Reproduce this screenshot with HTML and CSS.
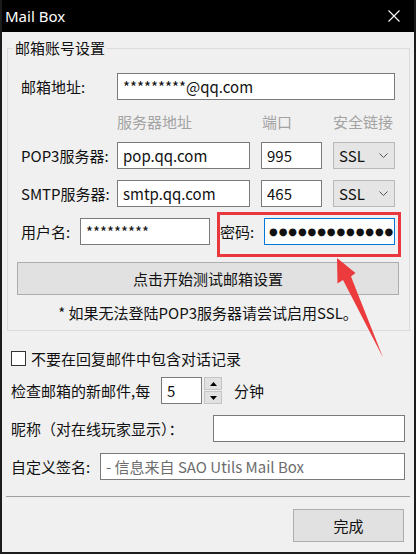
FILE: index.html
```html
<!doctype html>
<html lang="zh-CN">
<head>
  <meta charset="UTF-8" />
  <title>Mail Box</title>
  <link rel="stylesheet" href="styles.css">
</head>
<body>

<section class="window">
  <div class="titlebar">
    <span class="title">Mail Box</span>
    <svg class="close" width="12" height="12" viewBox="0 0 12 12">
      <path d="M0.5,0.5 L11.5,11.5 M11.5,0.5 L0.5,11.5" stroke="#fff" stroke-width="1.1" fill="none" />
    </svg>
  </div>

  <div class="main">
    <fieldset class="group">
      <legend>邮箱账号设置</legend>

      <div class="row">
        <label class="lbl lbl-mail">邮箱地址:</label>
        <input class="field grow" type="text" value="*********@qq.com" />
      </div>

      <div class="heads">
        <span class="h-host">服务器地址</span>
        <span class="h-port">端口</span>
        <span class="h-ssl">安全链接</span>
      </div>

      <div class="row srv">
        <label class="lbl lbl-srv">POP3服务器:</label>
        <input class="field host" type="text" value="pop.qq.com" />
        <input class="field port" type="text" value="995" />
        <div class="select"><span>SSL</span>
          <svg width="9" height="6" viewBox="0 0 9 6"><path d="M0.5,0.5 L4.5,4.5 L8.5,0.5" stroke="#555" fill="none" /></svg>
        </div>
      </div>

      <div class="row srv">
        <label class="lbl lbl-srv">SMTP服务器:</label>
        <input class="field host" type="text" value="smtp.qq.com" />
        <input class="field port" type="text" value="465" />
        <div class="select"><span>SSL</span>
          <svg width="9" height="6" viewBox="0 0 9 6"><path d="M0.5,0.5 L4.5,4.5 L8.5,0.5" stroke="#555" fill="none" /></svg>
        </div>
      </div>

      <div class="row srv">
        <label class="lbl lbl-user">用户名:</label>
        <input class="field user" type="text" value="*********" />
        <label class="lbl lbl-pass">密码:</label>
        <input class="field pass" type="text" value="●●●●●●●●●●●●●●●●" />
      </div>

      <button class="btn btn-test" type="button">点击开始测试邮箱设置</button>
      <p class="note">* 如果无法登陆POP3服务器请尝试启用SSL。</p>
    </fieldset>

    <div class="opts">
      <label class="check"><span class="box"></span>不要在回复邮件中包含对话记录</label>

      <div class="row interval">
        <span class="lbl lbl-every">检查邮箱的新邮件,每</span>
        <input class="field num" type="text" value="5" />
        <div class="spin">
          <span class="spin-btn"><svg width="7" height="4" viewBox="0 0 7 4"><path d="M0,4 L3.5,0 L7,4 z" fill="#000" /></svg></span>
          <span class="spin-btn"><svg width="7" height="4" viewBox="0 0 7 4"><path d="M0,0 L3.5,4 L7,0 z" fill="#000" /></svg></span>
        </div>
        <span class="unit">分钟</span>
      </div>

      <div class="row nick">
        <span class="lbl grow">昵称（对在线玩家显示）：</span>
        <input class="field nick-inp" type="text" value="" />
      </div>

      <div class="row sign">
        <span class="lbl lbl-sign">自定义签名:</span>
        <input class="field grow" type="text" placeholder="- 信息来自 SAO Utils Mail Box" />
      </div>
    </div>

    <div class="sep"></div>

    <div class="footer">
      <button class="btn btn-done" type="button">完成</button>
    </div>
  </div>

  <!--Пометка на скриншоте-->
  <div class="mark"></div>
  <svg class="arrow" width="62" height="112" viewBox="328 250 62 112">
    <polygon points="337,258 355.5,273 351,276.5 383,357.5 343,280 337.5,283.5" fill="#ec3b3d" />
  </svg>
</section>

</body>
</html>
```

FILE: styles.css
```css
html, body {
  margin: 0;
  padding: 0;
}
* {
  box-sizing: border-box;
}
.window {
  position: relative;
  width: 416px;
  height: 554px;
  background: #f0f0f0;
  border: 2px solid #1c1c1c;
  border-top: 0;
  font-family: "Noto Sans CJK SC", sans-serif;
  font-size: 15px;
  color: #111;
}
.titlebar {
  display: flex;
  align-items: center;
  justify-content: space-between;
  height: 32px;
  padding: 0 14px 0 3px;
  background: #000;
  color: #fff;
}
.title {
  font-family: "Noto Sans", sans-serif;
  font-size: 15px;
}
.main {
  padding: 6px 4px 0 5px;
}
/*Group box*/
.group {
  margin: 0;
  padding: 15px 14px 7px 13px;
  border: 1px solid #dcdcdc;
}
.group legend {
  margin-left: -8px;
  padding: 0 2px;
  line-height: 20px;
}
.row {
  display: flex;
  align-items: center;
  height: 27px;
}
.lbl {
  white-space: nowrap;
}
.grow {
  flex: 1;
}
.lbl-mail,
.lbl-srv {
  width: 96px;
}
.field {
  height: 27px;
  margin: 0;
  padding: 0 5px;
  border: 1px solid #7a7a7a;
  background: #fff;
  font-family: "Noto Sans CJK SC", sans-serif;
  font-size: 15px;
  color: #111;
  outline: none;
}
.field::placeholder {
  color: #6d6d6d;
}
.heads {
  display: flex;
  height: 20px;
  margin-top: 12px;
  padding-left: 96px;
  line-height: 20px;
  color: #a3a3a3;
}
.h-host {
  width: 145px;
}
.h-port {
  width: 71px;
}
.srv {
  margin-top: 11px;
}
.heads + .srv {
  margin-top: 10px;
}
.host {
  width: 133px;
}
.port {
  width: 61px;
  margin-left: 11px;
}
.select {
  display: flex;
  align-items: center;
  justify-content: space-between;
  width: 62px;
  height: 27px;
  margin-left: 11px;
  padding: 0 6px 0 5px;
  background: #e5e5e5;
  border: 1px solid #b8b8b8;
}
.lbl-user {
  width: 59px;
}
.user {
  width: 130px;
}
.lbl-pass {
  width: 44px;
  margin-left: 10px;
}
.pass {
  width: 131px;
  padding: 0 0 0 4px;
  border-color: #0078d7;
  font-family: "DejaVu Sans", sans-serif;
  font-size: 10px;
  letter-spacing: 0.9px;
}
.btn {
  display: block;
  margin: 0;
  padding: 0;
  background: #e1e1e1;
  border: 1px solid #adadad;
  font-family: "Noto Sans CJK SC", sans-serif;
  font-size: 15px;
  color: #111;
}
.btn-test {
  width: calc(100% + 8px);
  height: 33px;
  margin: 17px -4px 0;
}
.note {
  margin: 8px 0 0;
  line-height: 20px;
  text-align: center;
}
/*Options*/
.opts {
  padding: 0 5px 0 4px;
}
.check {
  display: flex;
  align-items: center;
  height: 20px;
  margin-top: 17px;
}
.box {
  width: 15px;
  height: 15px;
  margin-right: 5px;
  background: #fff;
  border: 1px solid #333;
}
.interval {
  margin-top: 9px;
}
.lbl-every {
  width: 150px;
}
.num {
  width: 41px;
}
.spin {
  display: flex;
  flex-direction: column;
  gap: 1px;
  margin-left: 2px;
}
.spin-btn {
  display: flex;
  align-items: center;
  justify-content: center;
  width: 18px;
  height: 13px;
  background: #e1e1e1;
  border: 1px solid #c4c4c4;
}
.unit {
  margin-left: 12px;
}
.nick,
.sign {
  margin-top: 11px;
}
.nick-inp {
  width: 192px;
}
.lbl-sign {
  width: 89px;
}
.sep {
  height: 1px;
  margin: 16px 0 0 -1px;
  background: #a0a0a0;
}
.footer {
  display: flex;
  justify-content: flex-end;
  margin-top: 12px;
  padding-right: 6px;
}
.btn-done {
  width: 111px;
  height: 33px;
}
/*Annotation*/
.mark {
  position: absolute;
  left: 215px;
  top: 212px;
  width: 184px;
  height: 45px;
  border: 3px solid #e8383d;
}
.arrow {
  position: absolute;
  left: 326px;
  top: 250px;
}
```
